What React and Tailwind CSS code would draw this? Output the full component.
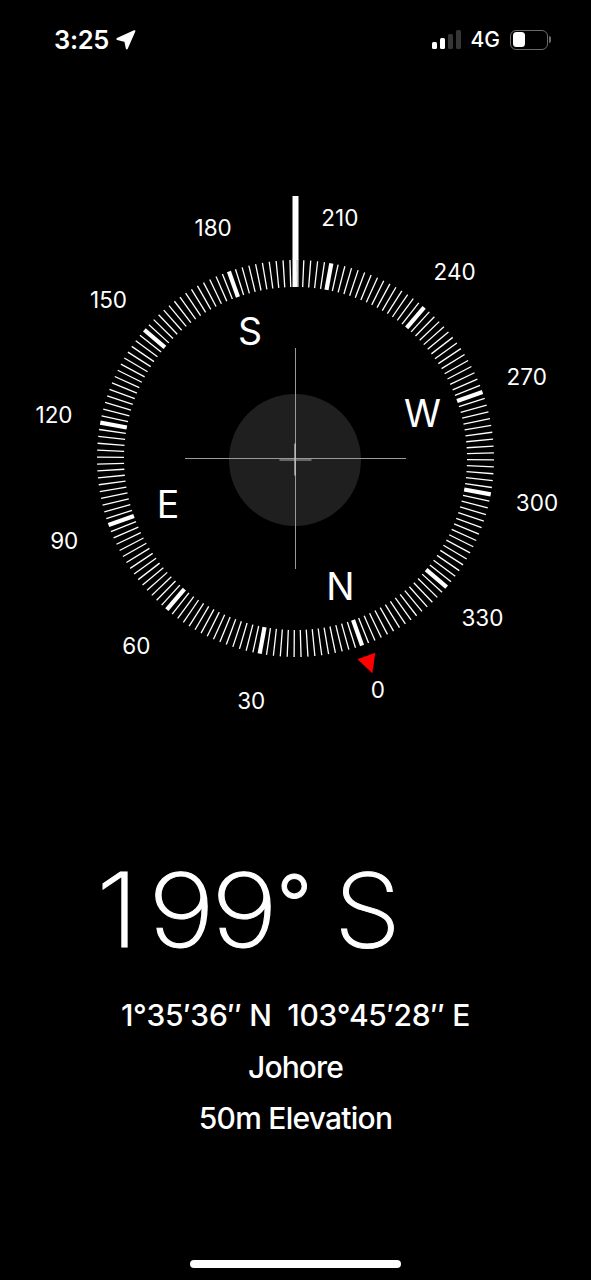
const HEADING = 199.6;

const TICKS = Array.from({ length: 180 }, (_, i) => i * 2);
const DEGREES = Array.from({ length: 12 }, (_, i) => i * 30);
const CARDINALS = [
  { label: 'N', degree: 0 },
  { label: 'E', degree: 90 },
  { label: 'S', degree: 180 },
  { label: 'W', degree: 270 },
];

// position on the dial for a compass degree, 0,0 is the centre
const polar = (degree, radius) => {
  const rad = ((degree - HEADING) * Math.PI) / 180;
  return { x: Math.sin(rad) * radius, y: -Math.cos(rad) * radius };
};

function StatusBar() {
  return (
    <header className="flex h-[79px] items-center justify-between pl-[54px] pr-10">
      <div className="flex items-center gap-[7px]">
        <span className="text-[25.5px] font-semibold leading-none tracking-[-0.3px]">3:25</span>
        <svg className="h-5 w-5" viewBox="0 0 20 20" fill="currentColor" stroke="currentColor">
          <path d="M18.4 1.2 1.4 9 9.3 11.1 10.8 18.4Z" strokeWidth="2" strokeLinejoin="round" />
        </svg>
      </div>
      <div className="flex items-center">
        <div className="flex items-end gap-[3px]">
          <div className="h-[7px] w-[5px] rounded-[1.5px] bg-white" />
          <div className="h-[11px] w-[5px] rounded-[1.5px] bg-white" />
          <div className="h-[15px] w-[5px] rounded-[1.5px] bg-[#363636]" />
          <div className="h-[19px] w-[5px] rounded-[1.5px] bg-[#363636]" />
        </div>
        <span className="ml-[10px] text-[21px] font-medium leading-none">4G</span>
        <div className="ml-[10px] flex items-center gap-px">
          <div className="h-[20px] w-[38px] rounded-[6px] border-[1.5px] border-[#6b6b6b] p-[1.5px]">
            <div className="h-full w-[12px] rounded-[3.5px] bg-white" />
          </div>
          <div className="h-[7px] w-[2px] rounded-r-full bg-[#6b6b6b]" />
        </div>
      </div>
    </header>
  );
}

function Dial() {
  return (
    <svg className="block h-[680px] w-[591px] shrink-0" viewBox="-295.5 -379.5 591 680" fill="white">
      <circle cx="-0.5" cy="1.5" r="66" fill="#1f1f1f" />

      {/* Crosshair */}
      <path d="M0 -110.5V110.5M-110.5 0H110.5" stroke="#9a9a9a" strokeWidth="1" />
      <path d="M-16 1.5H16" stroke="#828282" strokeWidth="1.6" />
      <path d="M-0.5 -15V17" stroke="#d0d0d0" strokeWidth="1.2" />

      {/* Ring */}
      {TICKS.map((degree) => (
        <line
          key={degree}
          y1="-198.5"
          y2="-171.5"
          stroke="white"
          strokeWidth={degree % 30 === 0 ? 4.2 : 1.3}
          transform={`rotate(${degree - HEADING})`}
        />
      ))}

      {/* North marker */}
      <path d="M-10 -209.8H9L-0.4 -228Z" fill="#ff0000" transform={`rotate(${-HEADING})`} />

      {DEGREES.map((degree) => {
        const { x, y } = polar(degree, 245.5);
        return (
          <text key={degree} x={x} y={y + 8.6} fontSize="22.5" textAnchor="middle">
            {degree}
          </text>
        );
      })}

      {CARDINALS.map(({ label, degree }) => {
        const { x, y } = polar(degree, 135);
        return (
          <text key={label} x={x - 0.3} y={y + 14} fontSize="37.5" textAnchor="middle">
            {label}
          </text>
        );
      })}

      {/* Heading needle */}
      <rect x="-3" y="-262.5" width="6" height="64" />
      <rect x="-3" y="-199" width="4" height="27.5" />
      <rect x="1.8" y="-199" width="1.2" height="27.5" />
    </svg>
  );
}

export default function App() {
  return (
    <div className="flex h-[1280px] w-[591px] flex-col overflow-hidden bg-black font-['Inter',sans-serif] text-white">
      <StatusBar />
      <Dial />
      <main className="flex flex-1 flex-col pt-[90px]">
        <h1 className="h-[122px] whitespace-nowrap pl-[96px] text-[102.5px] font-extralight leading-[122px] [-webkit-text-stroke:1px_white]">
          <span className="inline-block origin-left scale-x-[1.1] tracking-[13px]">1</span>
          <span className="inline-block origin-left scale-x-[1.12] tracking-[-3.4px]">99</span>
          <span className="ml-[16px] align-[16px] text-[77px] font-light leading-none tracking-[-9px]">°</span>
          {' '}
          <span className="ml-[2px] inline-block origin-left scale-x-[1.05]">S</span>
        </h1>
        <div className="mt-[19px] flex flex-col items-center text-[30px] font-medium leading-[51.5px]">
          <p className="whitespace-pre tracking-[-0.25px]">1°35′36″ N  103°45′28″ E</p>
          <p className="tracking-[-0.9px]">Johore</p>
          <p className="tracking-[-0.75px]">50m Elevation</p>
        </div>
      </main>
      <div className="mb-3 h-2 w-[211px] self-center rounded-full bg-white" />
    </div>
  );
}
